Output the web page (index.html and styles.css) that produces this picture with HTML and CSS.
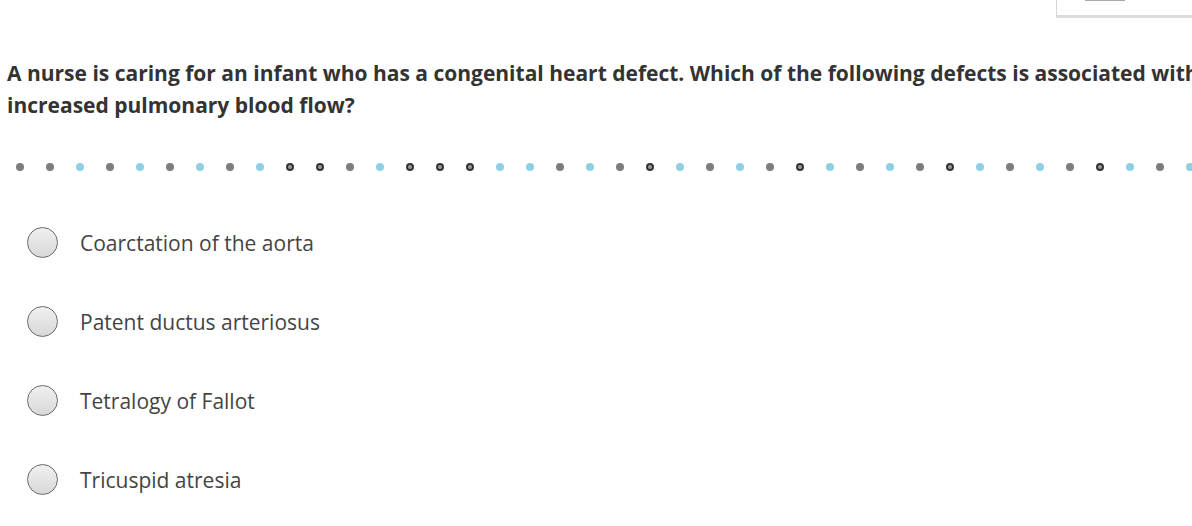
FILE: index.html
```html
<!DOCTYPE html>
<html>
<head>
<meta charset="utf-8">
<link rel="stylesheet" href="styles.css">
</head>
<body>
<div class="page">
  <div class="topbox"><div class="topbar"></div></div>
  <div class="question">A nurse is caring for an infant who has a congenital heart defect. Which of the following defects is associated with increased pulmonary blood flow?</div>
  <div class="dots" id="dots"></div>
  <div class="options">
    <label class="option"><span class="radio"></span><span class="opt-text">Coarctation of the aorta</span></label>
    <label class="option"><span class="radio"></span><span class="opt-text">Patent ductus arteriosus</span></label>
    <label class="option"><span class="radio"></span><span class="opt-text">Tetralogy of Fallot</span></label>
    <label class="option"><span class="radio"></span><span class="opt-text">Tricuspid atresia</span></label>
  </div>
</div>
<script>
  var seq = "GGBGBGBGBRRGBRRRBBGBGRBGBGRBGBGRBGBGRBGB";
  var d = document.getElementById('dots');
  for (var i = 0; i < seq.length; i++) {
    var s = document.createElement('span');
    s.className = 'dot dot-' + seq[i];
    d.appendChild(s);
  }
</script>
</body>
</html>
```
FILE: styles.css
```css
html, body {
  margin: 0;
  padding: 0;
  background: #fff;
  overflow: hidden;
}
.page {
  position: relative;
  width: 1192px;
  height: 526px;
  overflow: hidden;
  font-family: "Open Sans", "Liberation Sans", sans-serif;
}
.topbox {
  position: absolute;
  left: 1056px;
  top: -20px;
  width: 200px;
  height: 34px;
  border: 1px solid #d8d4d4;
  border-bottom: 3px solid #dedada;
  background: #fff;
}
.topbar {
  position: absolute;
  left: 28px;
  top: 19px;
  width: 40px;
  height: 1px;
  background: #aaa;
}
.question {
  width: 1240px;
  padding: 57px 0 0 7px;
  font-size: 21px;
  font-weight: 700;
  line-height: 32px;
  color: #333;
}
.dots {
  display: flex;
  gap: 22px;
  padding: 42px 0 0 16px;
  width: 1300px;
  height: 8px;
}
.dot {
  flex: none;
  width: 8px;
  height: 8px;
  border-radius: 50%;
  box-sizing: border-box;
}
.dot-G { background: #7f7c7c; }
.dot-B { background: #8fcfe4; }
.dot-R { background: #9a9a9a; border: 2px solid #333; }
.options {
  display: flex;
  flex-direction: column;
  gap: 48px;
  padding: 56px 0 0 27px;
}
.option {
  display: flex;
  align-items: center;
  gap: 22px;
  height: 31px;
}
.radio {
  flex: none;
  width: 31px;
  height: 31px;
  box-sizing: border-box;
  border-radius: 50%;
  border: 1.5px solid #6b6b6b;
  background: linear-gradient(#f0f0f0, #d8d8d8);
}
.opt-text {
  font-size: 21px;
  color: #444;
}
```
